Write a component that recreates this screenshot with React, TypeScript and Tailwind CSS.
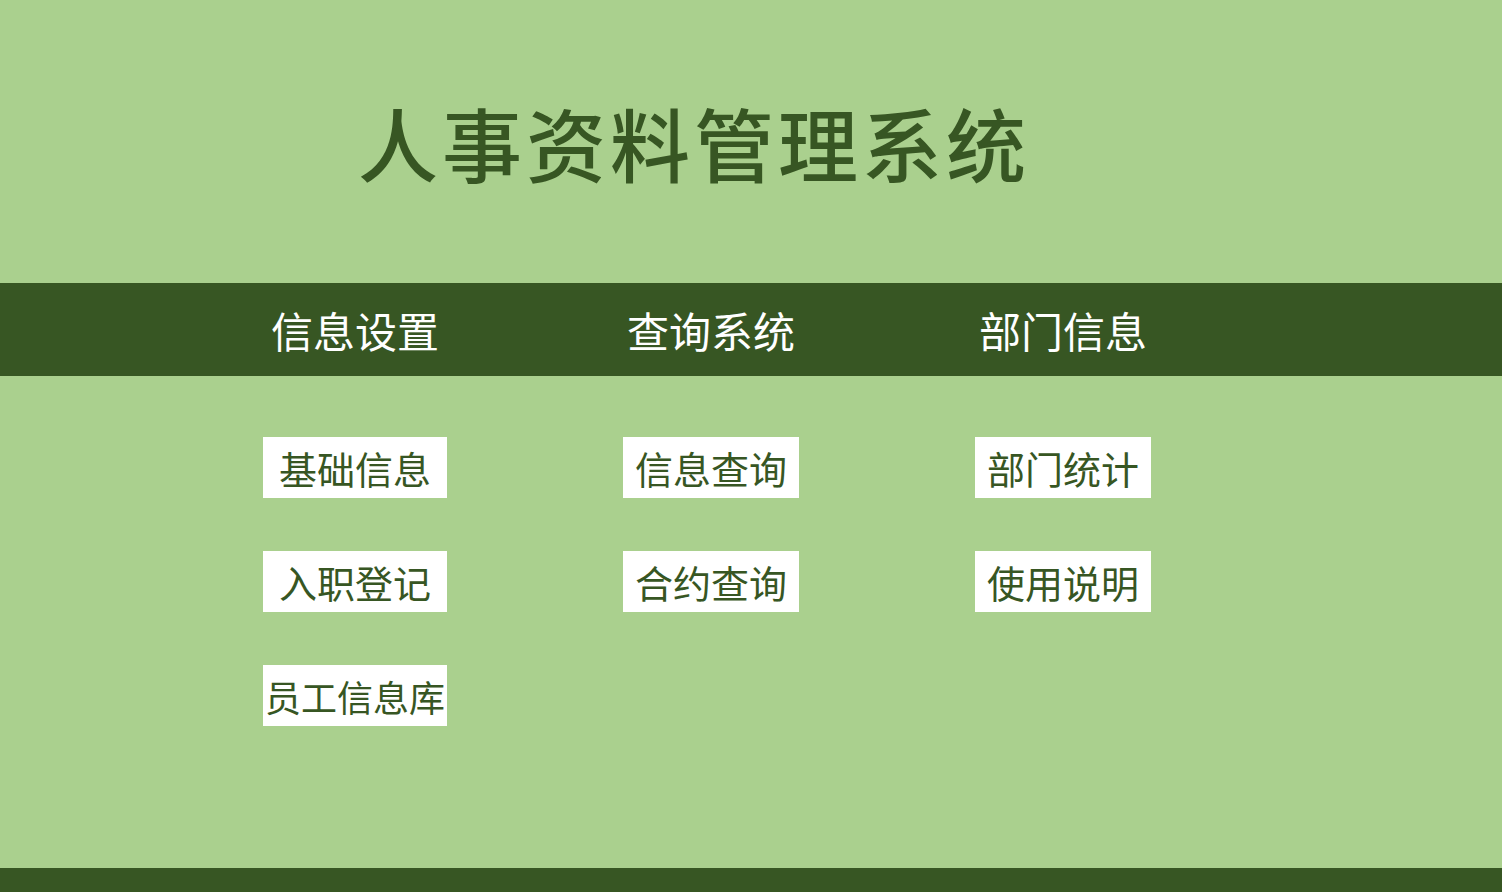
const MENUS = [
  { title: "信息设置", items: ["基础信息", "入职登记", "员工信息库"], col: "w-[356px]", w: "w-[184px]" },
  { title: "查询系统", items: ["信息查询", "合约查询"], col: "w-[356px]", w: "w-[176px]" },
  { title: "部门信息", items: ["部门统计", "使用说明"], col: "w-[348px]", w: "w-[176px]" },
]

const FONT = "font-['Noto_Sans_CJK_SC','Noto_Sans',sans-serif]"

export default function App() {
  return (
    <div className={`flex h-[892px] w-[1502px] flex-col bg-[#aad08e] ${FONT}`}>
      {/* title block */}
      <div className="flex h-[283px] items-start pl-[358px] pt-[101px]">
        <h1 className="text-[80px] leading-none font-medium tracking-[4px] text-[#375623]">
          人事资料管理系统
        </h1>
      </div>

      {/* main nav bar */}
      <nav className="flex h-[93px] items-center bg-[#375623] pl-[177px]">
        {MENUS.map((m) => (
          <div key={m.title} className={`flex ${m.col} justify-center`}>
            <span className="text-[42px] leading-none text-white">{m.title}</span>
          </div>
        ))}
      </nav>

      {/* sub menu buttons */}
      <div className="flex flex-1 items-start pl-[177px] pt-[61px]">
        {MENUS.map((m) => (
          <div key={m.title} className={`flex ${m.col} flex-col items-center gap-[53px]`}>
            {m.items.map((it) => (
              <button
                key={it}
                className={`flex h-[61px] ${m.w} items-center justify-center bg-white leading-none whitespace-nowrap text-[#375623] ${
                  it.length > 4 ? "text-[36px]" : "text-[38px]"
                }`}
              >
                {it}
              </button>
            ))}
          </div>
        ))}
      </div>

      <footer className="h-[24px] bg-[#375623]" />
    </div>
  )
}
